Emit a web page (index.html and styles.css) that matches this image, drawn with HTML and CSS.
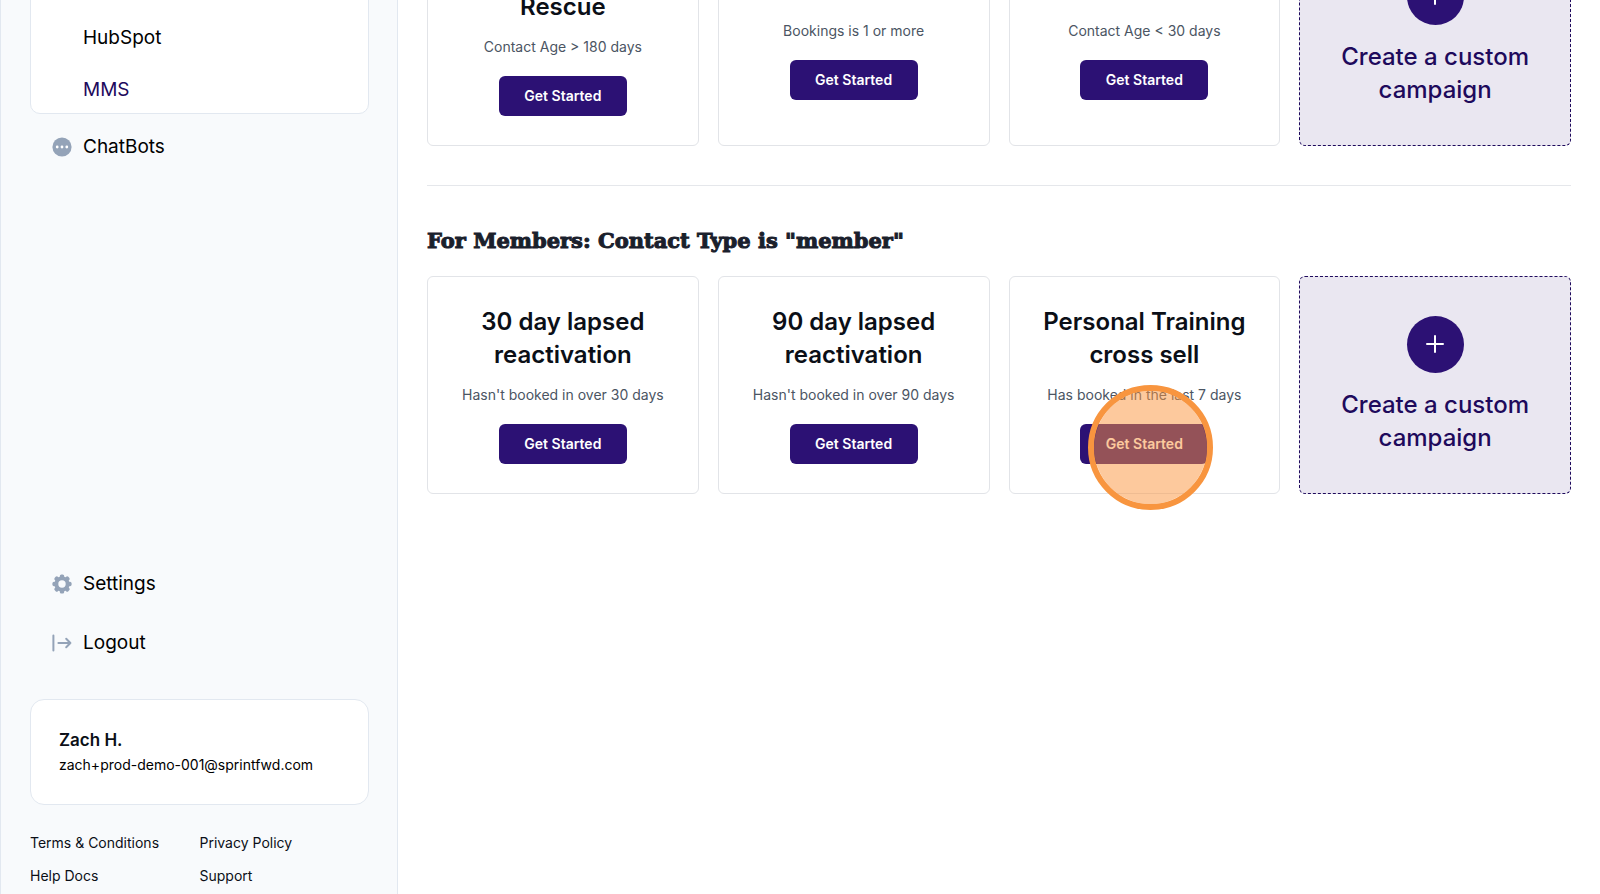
FILE: index.html
```html
<!DOCTYPE html>
<html lang="en">
<head>
  <meta charset="UTF-8" />
  <meta name="viewport" content="width=device-width, initial-scale=1.0"/>
  <title>MMS Campaigns</title>
  <link rel="stylesheet" href="styles.css">
</head>
<body>
  <div class="app">
    <aside class="sidebar">
      <nav class="nav-group">
        <a class="nav-link nav-parent" href="#">Campaigns</a>
        <a class="nav-link" href="#">HubSpot</a>
        <a class="nav-link active" href="#">MMS</a>
      </nav>
      <nav class="nav">
        <a class="nav-item" href="#">
          <svg class="nav-icon" viewBox="0 0 20 20">
            <circle cx="10" cy="10" r="9.6" fill="#94a3b8"/>
            <circle cx="5.2" cy="10" r="1.4" fill="#fff"/>
            <circle cx="10" cy="10" r="1.4" fill="#fff"/>
            <circle cx="14.8" cy="10" r="1.4" fill="#fff"/>
          </svg>
          ChatBots
        </a>
      </nav>
      <nav class="nav nav-bottom">
        <a class="nav-item" href="#">
          <svg class="nav-icon" viewBox="0 0 20 20">
            <g fill="#94a3b8">
              <rect x="7.8" y="0.4" width="4.4" height="19.2" rx="1.6"/>
              <rect x="7.8" y="0.4" width="4.4" height="19.2" rx="1.6" transform="rotate(45 10 10)"/>
              <rect x="7.8" y="0.4" width="4.4" height="19.2" rx="1.6" transform="rotate(90 10 10)"/>
              <rect x="7.8" y="0.4" width="4.4" height="19.2" rx="1.6" transform="rotate(135 10 10)"/>
              <circle cx="10" cy="10" r="7.6"/>
            </g>
            <circle cx="10" cy="10" r="3.7" fill="#f8fafc"/>
          </svg>
          Settings
        </a>
        <a class="nav-item" href="#">
          <svg class="nav-icon" viewBox="0 0 20 20" fill="none" stroke="#94a3b8" stroke-width="2" stroke-linecap="round" stroke-linejoin="round">
            <path d="M1.4 2.6v14.8M6.4 10h12M14.2 5.8l4.2 4.2-4.2 4.2"/>
          </svg>
          Logout
        </a>
      </nav>
      <div class="user-card">
        <div class="user-name">Zach H.</div>
        <div class="user-email">zach+prod-demo-001@sprintfwd.com</div>
      </div>
      <div class="footer-links">
        <a href="#">Terms &amp; Conditions</a>
        <a href="#">Privacy Policy</a>
        <a href="#">Help Docs</a>
        <a href="#">Support</a>
      </div>
    </aside>

    <main class="content">
      <section class="cards">
        <div class="card">
          <h3>Lead<br>Rescue</h3>
          <p>Contact Age &gt; 180 days</p>
          <button class="btn" type="button">Get Started</button>
        </div>
        <div class="card">
          <h3>Win back</h3>
          <p>Bookings is 1 or more</p>
          <button class="btn" type="button">Get Started</button>
        </div>
        <div class="card">
          <h3>New lead</h3>
          <p>Contact Age &lt; 30 days</p>
          <button class="btn" type="button">Get Started</button>
        </div>
        <button class="card card-custom" type="button">
          <span class="plus">
            <svg viewBox="0 0 18 18" stroke="#fff" stroke-width="2" stroke-linecap="round"><path d="M9 1v16M1 9h16"/></svg>
          </span>
          <span>Create a custom campaign</span>
        </button>
      </section>

      <hr class="divider">

      <h2 class="section-title">For Members: Contact Type is "member"</h2>
      <section class="cards">
        <div class="card">
          <h3>30 day lapsed reactivation</h3>
          <p>Hasn't booked in over 30 days</p>
          <button class="btn" type="button">Get Started</button>
        </div>
        <div class="card">
          <h3>90 day lapsed reactivation</h3>
          <p>Hasn't booked in over 90 days</p>
          <button class="btn" type="button">Get Started</button>
        </div>
        <div class="card">
          <h3>Personal Training cross sell</h3>
          <p>Has booked in the last 7 days</p>
          <button class="btn" type="button">Get Started</button>
          <span class="click-marker"></span>
        </div>
        <button class="card card-custom" type="button">
          <span class="plus">
            <svg viewBox="0 0 18 18" stroke="#fff" stroke-width="2" stroke-linecap="round"><path d="M9 1v16M1 9h16"/></svg>
          </span>
          <span>Create a custom campaign</span>
        </button>
      </section>
    </main>
  </div>
</body>
</html>
```
FILE: styles.css
```css
* {
  box-sizing: border-box;
}
body {
  margin: 0;
  background-color: #fff;
  font-family: Inter, "Liberation Sans", sans-serif;
  color: #0b0f17;
}
a {
  color: inherit;
  text-decoration: none;
}
.app {
  display: flex;
  height: 100vh;
  overflow: hidden;
}

/* sidebar */
.sidebar {
  display: flex;
  flex-direction: column;
  flex: 0 0 398px;
  padding: 0 28px 0 29px;
  background-color: #f8fafc;
  border-left: 1px solid #e2e8f0;
  border-right: 1px solid #e2e8f0;
}
.nav-group {
  display: flex;
  flex-direction: column;
  gap: 28px;
  margin-top: -47px;
  padding: 24px 52px 11px;
  background-color: #fff;
  border: 1px solid #e2e8f0;
  border-radius: 10px;
}
.nav-link,
.nav-item {
  font-size: 19px;
  line-height: 24px;
  color: #000;
}
.nav-parent {
  margin-bottom: -4px;
}
.nav-link.active {
  color: #1e0a5c;
}
.nav {
  display: flex;
  flex-direction: column;
  gap: 35px;
  padding: 21px 22px 0;
}
.nav-item {
  display: flex;
  align-items: center;
  gap: 11px;
}
.nav-icon {
  width: 20px;
  height: 20px;
}
.nav-bottom {
  margin-top: auto;
}
.user-card {
  margin-top: 44px;
  padding: 27px 28px;
  background-color: #fff;
  border: 1px solid #e2e8f0;
  border-radius: 14px;
}
.user-name {
  font-size: 17px;
  font-weight: 600;
  line-height: 26px;
}
.user-email {
  font-size: 14px;
  line-height: 24px;
  color: #000;
}
.footer-links {
  display: grid;
  grid-template-columns: 1fr 1fr;
  row-gap: 11px;
  padding: 27px 0 7px;
  font-size: 14px;
  line-height: 22px;
}

/* campaigns */
.content {
  flex: 1;
  margin-top: -72px;
  padding: 0 29px;
}
.cards {
  display: grid;
  grid-template-columns: repeat(4, 1fr);
  gap: 19px;
}
.card {
  position: relative;
  display: flex;
  flex-direction: column;
  align-items: center;
  justify-content: center;
  min-height: 218px;
  padding: 28px 28px 29px;
  text-align: center;
  background-color: #fff;
  border: 1px solid #e2e4e8;
  border-radius: 6px;
}
.card h3 {
  margin: 0;
  font-size: 24px;
  font-weight: 600;
  line-height: 33px;
}
.card p {
  margin: 13px 0 18px;
  font-size: 14px;
  line-height: 22px;
  color: #4b5563;
}
.btn {
  width: 128px;
  height: 40px;
  padding: 0 0 1px;
  font-family: inherit;
  font-size: 14px;
  font-weight: 600;
  color: #fff;
  background-color: #2c1174;
  border: none;
  border-radius: 6px;
  cursor: pointer;
}
.card-custom {
  gap: 15px;
  font-family: inherit;
  font-size: 24px;
  font-weight: 500;
  line-height: 33px;
  color: #1e0a5c;
  background-color: #eae7f1;
  border: 1px dashed #1e0a5c;
  cursor: pointer;
}
.plus {
  display: flex;
  align-items: center;
  justify-content: center;
  width: 57px;
  height: 57px;
  background-color: #2c1174;
  border-radius: 50%;
}
.plus svg {
  width: 18px;
  height: 18px;
}
.divider {
  margin: 39px 0 37px;
  border: none;
  border-top: 1px solid #e5e7eb;
}
.section-title {
  margin: 0 0 17px;
  font-family: "DejaVu Serif", serif;
  font-size: 21px;
  font-weight: 900;
  line-height: 36px;
  color: #1a202c;
  -webkit-text-stroke: 1px #1a202c;
}
.click-marker {
  position: absolute;
  top: 108px;
  left: 78px;
  width: 125px;
  height: 125px;
  background-color: rgba(251, 147, 60, 0.5);
  border: 6px solid #f8953f;
  border-radius: 50%;
  background-clip: padding-box;
  pointer-events: none;
}
```
